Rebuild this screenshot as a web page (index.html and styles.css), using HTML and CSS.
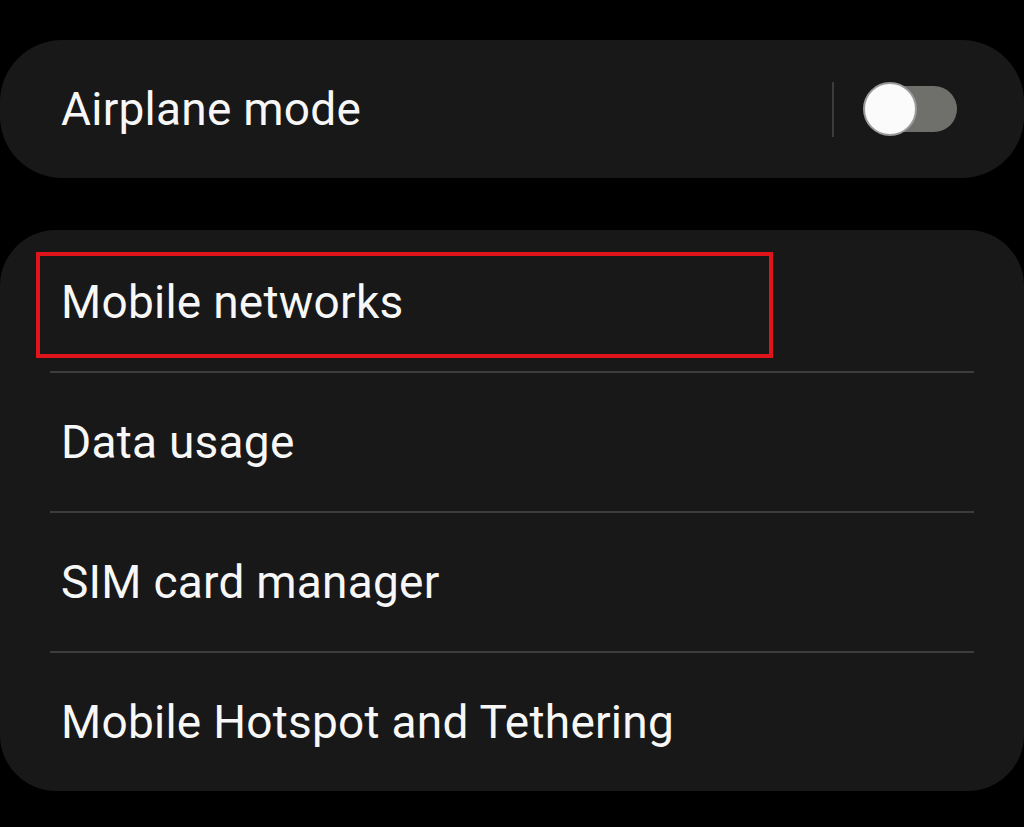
FILE: index.html
```html
<!DOCTYPE html>
<html lang="en">
<head>
    <meta charset="UTF-8">
    <title>Connections</title>
    <link rel="stylesheet" href="styles.css">
</head>
<body>

<div class="card card-single">
    <span class="label">Airplane mode</span>
    <div class="switch-wrap">
        <span class="vline"></span>
        <div class="switch">
            <span class="track"></span>
            <span class="knob"></span>
        </div>
    </div>
</div>

<div class="card card-list">
    <div class="row first">
        <span class="label">Mobile networks</span>
        <span class="highlight"></span>
    </div>
    <div class="divider"></div>
    <div class="row">
        <span class="label">Data usage</span>
    </div>
    <div class="divider"></div>
    <div class="row">
        <span class="label">SIM card manager</span>
    </div>
    <div class="divider"></div>
    <div class="row">
        <span class="label">Mobile Hotspot and Tethering</span>
    </div>
</div>

</body>
</html>
```

FILE: styles.css
```css
body {
    margin: 0;
    padding-top: 40px;
    background: #000;
    font-family: Roboto, "Noto Sans", sans-serif;
    color: #f7f7f7;
    min-height: 100vh;
    box-sizing: border-box;
}

.card {
    background: #181818;
}

.card-single {
    height: 138px;
    border-radius: 62px;
    display: flex;
    align-items: center;
    justify-content: space-between;
    padding: 0 67px 0 61px;
    box-sizing: border-box;
    margin-bottom: 52px;
}

.label {
    font-size: 46px;
    line-height: 1;
    letter-spacing: 0.25px;
}

.switch-wrap {
    display: flex;
    align-items: center;
}

.vline {
    width: 2px;
    height: 55px;
    background: #3c3c3c;
    margin-right: 29px;
}

.switch {
    position: relative;
    width: 94px;
    height: 54px;
}

.track {
    position: absolute;
    left: 3px;
    right: 0;
    top: 4px;
    height: 46px;
    border-radius: 23px;
    background: #6f6f6b;
}

.knob {
    position: absolute;
    left: 0;
    top: 0;
    width: 50px;
    height: 50px;
    border-radius: 50%;
    background: #fbfbfb;
    border: 2px solid #9a9a9a;
}

.card-list {
    border-radius: 56px;
    padding-top: 3px;
}

.row {
    height: 138px;
    display: flex;
    align-items: center;
    padding-left: 61px;
    position: relative;
}

.divider {
    height: 2px;
    margin: 0 50px;
    background: #3d3d3d;
}

.highlight {
    position: absolute;
    left: 36px;
    top: 19px;
    width: 737px;
    height: 106px;
    border: 4px solid #e0141b;
    box-sizing: border-box;
}
```
